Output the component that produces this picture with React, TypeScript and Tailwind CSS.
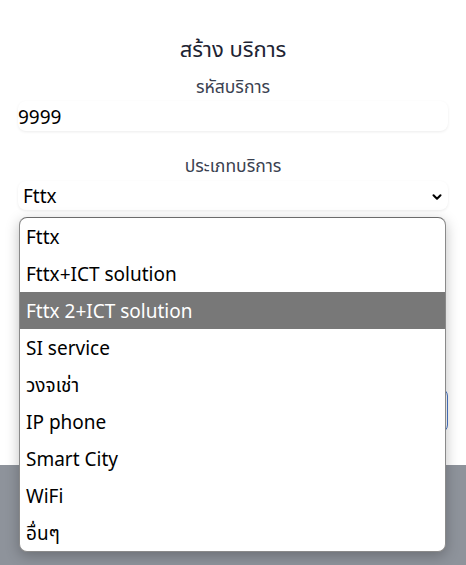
import { ChevronDown } from 'lucide-react';

const options = [
  'Fttx',
  'Fttx+ICT solution',
  'Fttx 2+ICT solution',
  'SI service',
  'วงจเช่า',
  'IP phone',
  'Smart City',
  'WiFi',
  'อื่นๆ',
];

export default function App() {
  const selected = 2;

  return (
    <div
      className="relative flex h-[565px] w-[466px] flex-col overflow-hidden bg-[#8e939b]"
      style={{ fontFamily: '"Noto Sans", "Noto Sans Thai", sans-serif' }}
    >
      <div className="flex h-[465px] flex-col bg-white px-[18px] pt-[32px]">
        <h1 className="text-center text-[22px] leading-[32px] text-[#1e2433]">
          สร้าง บริการ
        </h1>
        <label className="mt-[8px] text-center text-[17.5px] leading-[28px] text-[#3a4150]">
          รหัสบริการ
        </label>
        <div className="mt-[1px] flex h-[30px] items-center rounded-lg bg-white pt-[3px] text-[19px] text-black shadow-[0_1px_3px_rgba(0,0,0,0.08)]">
          9999
        </div>
        <label className="mt-[20px] text-center text-[17.5px] leading-[28px] text-[#3a4150]">
          ประเภทบริการ
        </label>
        <div className="mt-[2px] flex h-[29px] items-center justify-between rounded-lg bg-white pl-[5px] pr-[4px] pt-[2px] text-[19px] text-black shadow-[0_1px_3px_rgba(0,0,0,0.08)]">
          <span>Fttx</span>
          <ChevronDown size={14} strokeWidth={3.5} />
        </div>
        <button className="ml-[40px] mt-[178px] h-[45px] rounded-lg border border-[#4a78c8] bg-white" />
      </div>

      <ul className="absolute left-[19px] top-[217px] w-[427px] overflow-hidden rounded-lg border border-[#8a8a8a] border-t-[#6b6b6b] bg-white shadow-[0_4px_14px_rgba(0,0,0,0.25)]">
        {options.map((o, i) => (
          <li
            key={o}
            className={
              'flex h-[37px] items-center px-[6px] pt-[2px] text-[19px] ' +
              (i === selected ? 'bg-[#787878] text-white' : 'text-black')
            }
          >
            {o}
          </li>
        ))}
      </ul>
    </div>
  );
}
